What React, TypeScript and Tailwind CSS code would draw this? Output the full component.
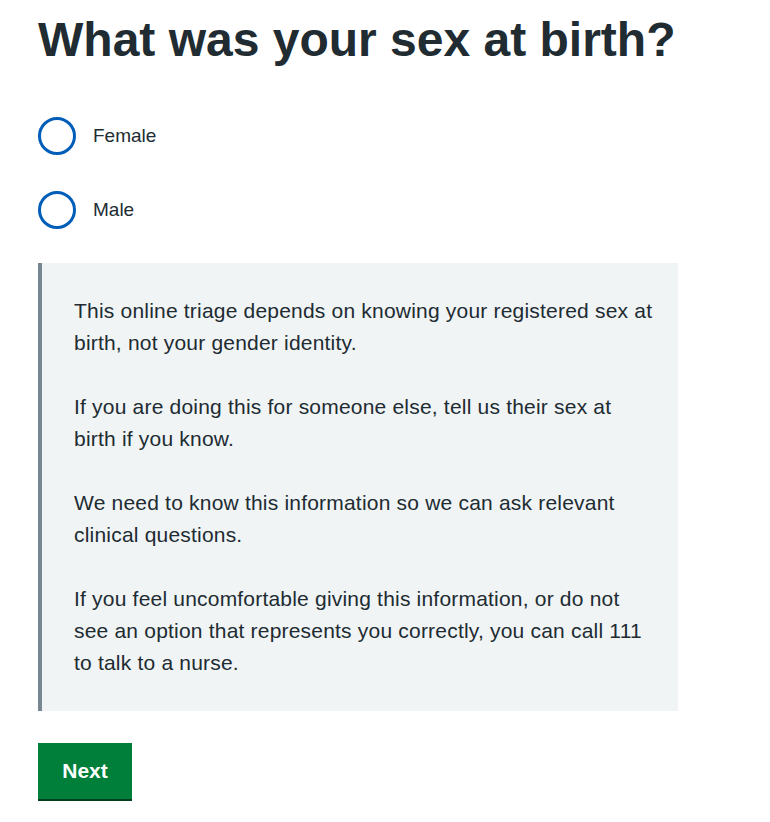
import React, { useState } from 'react';

const font = { fontFamily: '"Liberation Sans", Arial, sans-serif' };

const paragraphs = [
  'This online triage depends on knowing your registered sex at birth, not your gender identity.',
  'If you are doing this for someone else, tell us their sex at birth if you know.',
  'We need to know this information so we can ask relevant clinical questions.',
  'If you feel uncomfortable giving this information, or do not see an option that represents you correctly, you can call 111 to talk to a nurse.',
];

export default function App() {
  const [sex, setSex] = useState<string | null>(null);

  return (
    <div className="min-h-screen bg-white text-[#212b32] px-[38px] pt-[12px]" style={font}>
      <h1 className="text-[48px] leading-[56px] font-bold text-[#212b32]">
        What was your sex at birth?
      </h1>

      <div className="mt-[49px] flex flex-col gap-[36px]">
        {['Female', 'Male'].map(option => (
          <label key={option} className="flex items-center gap-[17px] cursor-pointer">
            <span className="w-[38px] h-[38px] rounded-full border-[3px] border-[#005eb8] flex items-center justify-center bg-white">
              {sex === option && <span className="w-[20px] h-[20px] rounded-full bg-[#005eb8]" />}
            </span>
            <input
              type="radio"
              name="sex"
              className="sr-only"
              checked={sex === option}
              onChange={() => setSex(option)}
            />
            <span className="text-[19px] leading-[28px]">{option}</span>
          </label>
        ))}
      </div>

      <div className="mt-[34px] w-[640px] bg-[#f0f4f5] border-l-4 border-[#768692] pl-[32px] pr-[20px] py-[32px] flex flex-col gap-[32px]">
        {paragraphs.map((p, i) => (
          <p key={i} className="text-[21px] leading-[32px] tracking-[0.2px]">{p}</p>
        ))}
      </div>

      <button className="mt-[32px] w-[94px] h-[56px] bg-[#007f3b] text-white text-[21px] font-bold shadow-[0_2px_0_#00401e]">
        Next
      </button>
    </div>
  );
}
